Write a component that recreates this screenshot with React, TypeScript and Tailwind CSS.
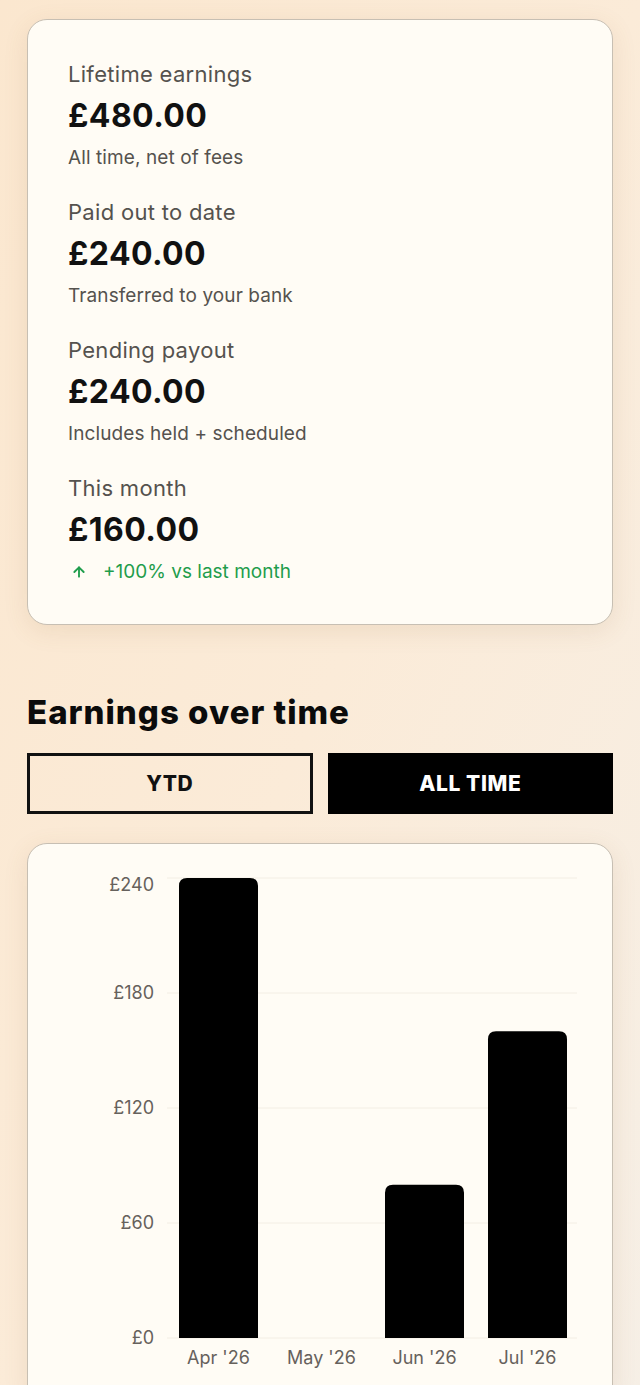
import React from "react";
import { ArrowUp } from "lucide-react";

const stats = [
  { label: "Lifetime earnings", amount: "£480.00", note: "All time, net of fees" },
  { label: "Paid out to date", amount: "£240.00", note: "Transferred to your bank" },
  { label: "Pending payout", amount: "£240.00", note: "Includes held + scheduled" },
  { label: "This month", amount: "£160.00", note: null },
];

const bars = [
  { month: "Apr '26", value: 240 },
  { month: "May '26", value: 0 },
  { month: "Jun '26", value: 80 },
  { month: "Jul '26", value: 160 },
];

const ticks = [240, 180, 120, 60, 0];

function EarningsChart() {
  // plot coordinates, relative to card's inner left/top
  const left = 139;
  const band = 103;
  const barW = 79;
  const top = 34;
  const bottom = 494;
  const scale = (v: number) => bottom - ((bottom - top) * v) / 240;

  return (
    <svg viewBox="0 0 584 560" className="block w-full h-[560px]" style={{ fontFamily: "Inter, 'Noto Sans', sans-serif" }}>
      {ticks.map((t) => (
        <g key={t}>
          <line x1={left} x2={left + band * 4 - 2} y1={scale(t)} y2={scale(t)} stroke="#f3eee4" strokeWidth={1} />
          <text
            x={126}
            y={t === 240 ? scale(t) + 8 : scale(t) + 1}
            textAnchor="end"
            dominantBaseline="middle"
            fontSize={18}
            fill="#66615c"
          >
            £{t}
          </text>
        </g>
      ))}
      {bars.map((b, i) => {
        const x = left + i * band + (band - barW) / 2;
        const y = scale(b.value);
        const h = bottom - y;
        return (
          <g key={b.month}>
            {h > 0 && (
              <path
                d={`M${x} ${bottom} V${y + 8} Q${x} ${y} ${x + 8} ${y} H${x + barW - 8} Q${x + barW} ${y} ${x + barW} ${y + 8} V${bottom} Z`}
                fill="#000"
              />
            )}
            <text
              x={left + i * band + band / 2}
              y={515}
              textAnchor="middle"
              dominantBaseline="middle"
              fontSize={18}
              fill="#66615c"
            >
              {b.month}
            </text>
          </g>
        );
      })}
    </svg>
  );
}

export default function App() {
  return (
    <div
      className="min-h-[1385px] bg-gradient-to-br from-[#fbe7cf] via-[#fbebd8] to-[#f6efe6] px-[27px] pt-[19px]"
      style={{ fontFamily: "Inter, 'Noto Sans', sans-serif" }}
    >
      <div className="rounded-[20px] border border-[#c7bfb3] bg-[#fffcf5] px-10 pt-10 pb-10 shadow-[0_6px_24px_rgba(150,110,60,0.12)]">
        <div className="flex flex-col gap-7">
          {stats.map((s) => (
            <div key={s.label} className="flex flex-col">
              <p className="text-[22px] leading-[28px] tracking-[0.3px] text-[#55524e]">{s.label}</p>
              <p className="mt-2 text-[32px] leading-[40px] font-bold tracking-[0.4px] text-[#111]">{s.amount}</p>
              {s.note ? (
                <p className="mt-[10px] text-[19px] leading-[24px] tracking-[0.1px] text-[#55524e]">{s.note}</p>
              ) : (
                <p className="mt-[10px] flex items-center text-[19px] leading-[24px] text-[#1f9d4c]">
                  <ArrowUp className="ml-[3px] h-4 w-4" strokeWidth={2.8} />
                  <span className="ml-[16px]">+100% vs last month</span>
                </p>
              )}
            </div>
          ))}
        </div>
      </div>

      <h2 className="mt-[67px] text-[33px] leading-[40px] font-extrabold tracking-[1px] text-[#0b0b0b]">
        Earnings over time
      </h2>

      <div className="mt-[21px] grid grid-cols-2 gap-[15px]">
        <button className="h-[61px] border-[3px] border-[#111] bg-transparent text-[21px] font-extrabold tracking-[0.6px] text-[#111]">
          YTD
        </button>
        <button className="h-[61px] bg-black text-[21px] font-extrabold tracking-[0.6px] text-white">
          ALL TIME
        </button>
      </div>

      <div className="mt-[29px] overflow-hidden rounded-[20px] border border-[#c7bfb3] bg-[#fffcf5] shadow-[0_6px_24px_rgba(150,110,60,0.12)]">
        <EarningsChart />
      </div>
    </div>
  );
}
